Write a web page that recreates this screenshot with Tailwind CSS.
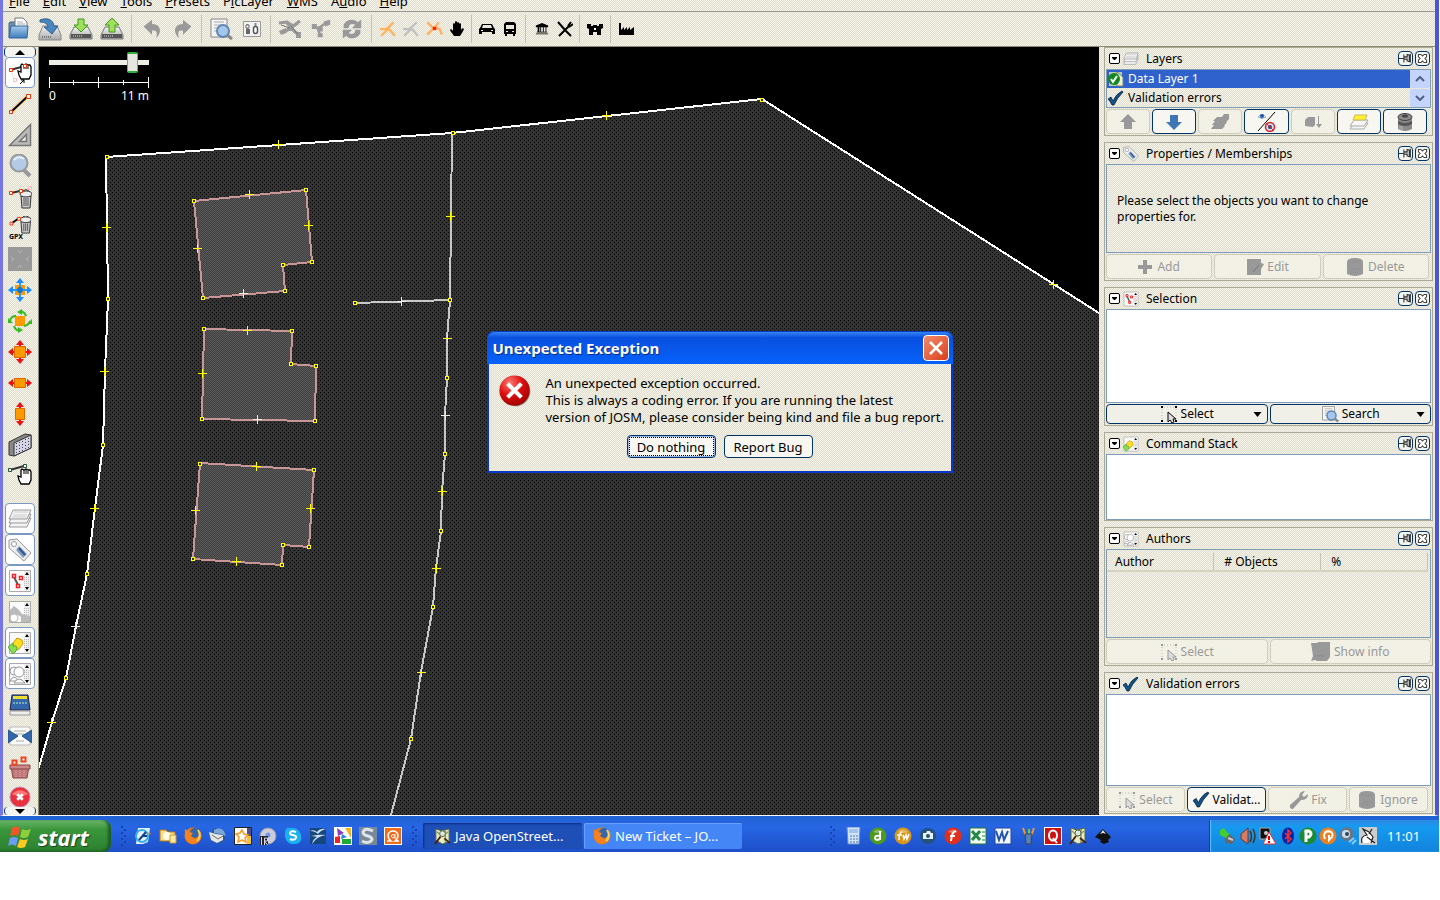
<!DOCTYPE html>
<html lang="en">
<head>
<meta charset="utf-8">
<title>Java OpenStreetMap Editor</title>
<script src="https://cdn.jsdelivr.net/npm/@tailwindcss/browser@4"></script>
</head>
<body class="bg-white text-black text-[12px] leading-4 font-['Noto_Sans','DejaVu_Sans',sans-serif] overflow-hidden">
<svg width="0" height="0" class="absolute" aria-hidden="true">
  <defs>
    <linearGradient id="blue" x1="0" y1="0" x2="0" y2="1"><stop offset="0" stop-color="#a9cbec"/><stop offset="1" stop-color="#3f7cbc"/></linearGradient>
    <linearGradient id="drive" x1="0" y1="0" x2="0" y2="1"><stop offset="0" stop-color="#f4f4f4"/><stop offset="1" stop-color="#a8a8a8"/></linearGradient>
    <radialGradient id="red" cx=".35" cy=".25" r=".8"><stop offset="0" stop-color="#ff7a70"/><stop offset=".5" stop-color="#dd1111"/><stop offset="1" stop-color="#a00000"/></radialGradient>
    <pattern id="dots" width="4" height="4" patternUnits="userSpaceOnUse"><rect width="4" height="4" fill="#333"/><path d="M0 0h1v1h-1zM2 2h1v1h-1z" fill="#000"/></pattern>
    <pattern id="roof" width="2" height="2" patternUnits="userSpaceOnUse"><rect width="2" height="2" fill="#404040"/><path d="M0 0h1v1h-1zM1 1h1v1h-1z" fill="#5a5a5a"/></pattern>
  </defs>
  <symbol id="open" viewBox="0 0 24 24"><path d="M2 20V6l1-1h5l2 2h9v13z" fill="#6f8fae" stroke="#3f6588"/><path d="M8 1h8l4 4v8H8z" fill="#fff" stroke="#777"/><path d="M10 5h6M10 7h8" stroke="#aaa"/><path d="M4 9h17l-1 12H2z" fill="url(#blue)" stroke="#2e659f"/></symbol>
  <symbol id="drv" viewBox="0 0 24 24"><path d="M5 10h14l4 8v4H1v-4z" fill="url(#drive)" stroke="#777"/><path d="M2 17h20v4H2z" fill="#555"/><path d="M4 19h10" stroke="#ddd" stroke-dasharray="1 1"/></symbol>
  <symbol id="openloc" viewBox="0 0 24 24"><path d="M5 9h14l4 9v5H1v-5z" fill="url(#drive)" stroke="#888"/><path d="M4 20h9" stroke="#777" stroke-width="2" stroke-dasharray="1 1"/><path d="M2 3c8-3 13 0 14 6h4l-6 8-8-7h4c0-3-3-5-8-5z" fill="#4a86be" stroke="#2b5f94"/></symbol>
  <symbol id="save" viewBox="0 0 24 24"><use href="#drv"/><path d="M9 2h6v6h4l-7 7-7-7h4z" fill="#9fe05a" stroke="#3f9a1a"/></symbol>
  <symbol id="upload" viewBox="0 0 24 24"><use href="#drv"/><path d="M9 15h6V8h4l-7-7-7 7h4z" fill="#9fe05a" stroke="#3f9a1a"/></symbol>
  <symbol id="undo" viewBox="0 0 24 24"><path d="M2 9l10-8v5c10 0 13 9 5 17 2-8 0-10-5-9v5z" fill="#999"/></symbol>
  <symbol id="find" viewBox="0 0 24 24"><path d="M2 2h16v18H2z" fill="#f5f5f5" stroke="#888"/><path d="M5 5h10M5 8h10M5 11h6M5 14h4" stroke="#aaa"/><circle cx="14" cy="14" r="6" fill="#a5c6ec" stroke="#5f86b4" stroke-width="2"/><path d="M18 18l5 4" stroke="#888" stroke-width="3"/></symbol>
  <symbol id="prefs" viewBox="0 0 24 24"><path d="M3.500 4.500h17v15h-17z" fill="#f2f2f2" stroke="#999"/><path d="M7.500 7v10M15.500 6v11" stroke="#888" stroke-width="2"/><path d="M6 12h4v5H6z" fill="#666"/><rect x="13.500" y="9.500" width="4" height="7" rx="2" fill="#fff" stroke="#555" stroke-width="1.500"/><path d="M6 8h3v3H6z" fill="#fff" stroke="#666"/></symbol>
  <symbol id="split" viewBox="0 0 24 24"><path d="M1 6l8-1 6 4 7-5M20 6L5 16M9 6l8 9 5 3" fill="none" stroke="#999" stroke-width="3"/><path d="M1 14l7-3 1 4-6 3zM18 15h5v6h-5zM9 10h6v4h-6z" fill="#999"/><path d="M3 8l9 3M13 9l7 8" stroke="#777"/></symbol>
  <symbol id="combine" viewBox="0 0 24 24"><path d="M3 9l6 2 10-7M8 11l3 8" fill="none" stroke="#999" stroke-width="3"/><path d="M1 6h6v6H1zM15 3l8-2v6l-6 2zM8 17h6v5H8zM8 9h6v6H8z" fill="#999"/></symbol>
  <symbol id="refresh" viewBox="0 0 24 24"><path d="M2 11V7C5 0 15-1 19 4l4-3v10H12l4-4c-4-2-8-1-8 4zM22 13v4c-3 7-13 8-17 3l-4 3V13h11l-4 4c4 2 8 1 8-4z" fill="#999"/></symbol>
  <symbol id="way" viewBox="0 0 16 16"><path d="M1 8h6l6-6M6 7l3 2M8 8l-6 6M9 8l5 6" fill="none" stroke="currentColor" stroke-width="2"/></symbol>
  <symbol id="junction" viewBox="0 0 16 16"><path d="M2 2l4 4 3 1 3-5M8 7l-6 6M8 7l5 1 2 5" fill="none" stroke="#ffb060" stroke-width="2"/><path d="M7 6h3v3H7z" fill="#f20"/></symbol>
  <symbol id="hand" viewBox="0 0 16 16"><path d="M5 15c-1-2-4-5-4-6s2-1 3 1V3c0-1 2-1 2 0V1c0-1 2-1 2 0v1c0-1 2-1 2 0v1c0-1 2-1 2 0v6c1-2 2-2 3-1-1 3-3 5-4 7z"/></symbol>
  <symbol id="car" viewBox="0 0 16 16"><path d="M3 3h10l2 4 1 1v5h-3v-2H3v2H0V8l1-1zm1 1L3 7h10l-1-3zM2 9v1h2V9zm10 0v1h2V9z" fill-rule="evenodd"/></symbol>
  <symbol id="bus" viewBox="0 0 16 16"><path d="M4 1h8l2 2v10h-1v2h-2v-2H5v2H3v-2H2V3zm0 3v4h8V4zm0 6v1h2v-1zm6 0v1h2v-1z" fill-rule="evenodd"/></symbol>
  <symbol id="bank" viewBox="0 0 16 16"><path d="M1 4l7-3 7 3v2H1zM3 6h2v5H3zM6 6h1v5H6zM9 6h1v5H9zM12 6h1v5h-1zM2 11h12v1H2zM1 13h14v1H1z"/></symbol>
  <symbol id="food" viewBox="0 0 16 16"><path d="M1 1l7 8 6 6M2 15L13 4M11 5l3-4M12 6l4-3" fill="none" stroke="#000" stroke-width="2"/></symbol>
  <symbol id="castle" viewBox="0 0 16 16"><path d="M0 3h4v2h2V4h4v1h2V3h4v4l-2 1v6h-4v-3H6v3H2V8L0 7z"/><path d="M7 7h2v2H7z" fill="#fff"/></symbol>
  <symbol id="factory" viewBox="0 0 16 16"><path d="M0 2h2v7l3-3v3l3-3v3l3-3v3l4-3v8H0z"/></symbol>
  <symbol id="grab" viewBox="0 0 24 24"><path d="M13 22l-2-4-1-4 3 1V8l1-1 2 1 2-1 2 1 2 0 1 2v8l-2 4z" fill="#fff" stroke="#000" stroke-width="1.300"/><path d="M16 8v4M18 8v4M20 9v3" stroke="#000"/></symbol>
  <symbol id="select" viewBox="0 0 24 24"><path d="M2 9l15-4" stroke="#333" stroke-width="2"/><path d="M3 10l3 8" fill="none" stroke="#fbb" stroke-dasharray="1 1"/><path d="M5.500 17.500h3v3h-3z" fill="none" stroke="#fbb"/><g transform="translate(0 -4)"><use href="#grab"/></g><path d="M1.500 7.500h3v3h-3zM15.500 3.500h3v3h-3z" fill="#fff" stroke="#e30"/><path d="M12 23l4-4m-3 0h3v3" fill="none" stroke="#000"/></symbol>
  <symbol id="draw" viewBox="0 0 24 24"><path d="M3 20L20 4" stroke="#fd6" stroke-width="4"/><path d="M3 20L20 4" stroke="#003" stroke-width="2"/><path d="M1.500 18.500h3v3h-3zM18.500 2.500h4v4h-4z" fill="#fff" stroke="#e30"/></symbol>
  <symbol id="angle" viewBox="0 0 24 24"><path d="M22.500 1.500v21h-21zM18.500 11.500v7h-7z" fill="#bbb" stroke="#777" stroke-width="1.500" fill-rule="evenodd"/></symbol>
  <symbol id="zoom" viewBox="0 0 24 24"><path d="M16 16l6 6" stroke="#999" stroke-width="4"/><circle cx="11" cy="9" r="8.500" fill="#b4cbe8" stroke="#999" stroke-width="2"/><path d="M6 6q5-5 10-1" stroke="#e4eefa" stroke-width="2" fill="none"/></symbol>
  <symbol id="bin" viewBox="0 0 24 24"><path d="M13 11h10l-1 12h-8z" fill="#ccc" stroke="#333"/><path d="M16 13v8M18 13v8M20 13v8" stroke="#555"/><ellipse cx="18" cy="9" rx="6" ry="3" fill="#eee" stroke="#333"/><path d="M15 6q3-3 6 0" stroke="#333" fill="none"/></symbol>
  <symbol id="delete" viewBox="0 0 24 24"><path d="M3 8l9-2" stroke="#333" stroke-width="2"/><use href="#bin"/><path d="M1.500 6.500h3v3h-3zM11.500 4.500h3v3h-3z" fill="#fff" stroke="#e30"/><path d="M20.500 1.500h3v3h-3z" fill="none" stroke="#fbb"/></symbol>
  <symbol id="delgpx" viewBox="0 0 24 24"><g transform="translate(0 -5)"><use href="#bin"/></g><path d="M3 8l7-5" stroke="#000" stroke-width="2"/><path d="M1.500 6.500h3v3h-3zM9.500 1.500h3v3h-3z" fill="#fff" stroke="#e30"/></symbol>
  <symbol id="grayarea" viewBox="0 0 24 24"><path d="M0 0h24v24H0z" fill="#999"/><path d="M10 3l2 3 2-3M10 21l2-3 2 3M3 10l3 2-3 2M21 10l-3 2 3 2" fill="none" stroke="#b4b4b4"/></symbol>
  <symbol id="move" viewBox="0 0 24 24"><path d="M7 7h10v10H7z" fill="#f90"/><path d="M12 2v20M2 12h20" stroke="#29f" stroke-width="2"/><path d="M12 0L8 5h8zM12 24l-4-5h8zM0 12l5-4v8zM24 12l-5-4v8z" fill="#1a8cff"/><circle cx="12" cy="12" r="3" fill="#17c"/></symbol>
  <symbol id="rotate" viewBox="0 0 24 24"><path d="M7 7h10v10H7z" fill="#f90"/><path d="M12 2q5 1 6 5M22 12q-1 4-6 5M12 22q-5-1-6-5M2 12q1-5 6-5" fill="none" stroke="#3b2" stroke-width="2"/><path d="M14 0v6l-5-3zM24 10v5h-5zM10 24v-6l5 3zM0 14V9l5 5z" fill="#3b2"/></symbol>
  <symbol id="scale" viewBox="0 0 24 24"><path d="M12 0L8 5h3v14H8l4 5 4-5h-3V5h3zM0 12l5-4v3h14V8l5 4-5 4v-3H5v3z" fill="#e11"/><path d="M6.500 6.500h11v11h-11z" fill="#f90" stroke="#d60"/></symbol>
  <symbol id="hscale" viewBox="0 0 24 24"><path d="M0 12l5-4v3h14V8l5 4-5 4v-3H5v3z" fill="#e11"/><path d="M6.500 7.500h11v9h-11z" fill="#f90" stroke="#d60"/></symbol>
  <symbol id="vscale" viewBox="0 0 24 24"><path d="M12 0L8 5h3v14H8l4 5 4-5h-3V5h3z" fill="#e11"/><path d="M7.500 6.500h9v11h-9z" fill="#f90" stroke="#d60"/></symbol>
  <symbol id="wall" viewBox="0 0 24 24"><path d="M1 9L17 1l6 1v13L6 23l-5-1z" fill="#888" stroke="#333"/><path d="M6 10l17-8v13L6 23z" fill="#d4d4e6" stroke="#333"/><path d="M8.500 10v11M11.500 9v10M14.500 8v10M17.500 6v10M20.500 5v10" stroke="#445" stroke-dasharray="1 2"/></symbol>
  <symbol id="movenode" viewBox="0 0 24 24"><path d="M2 8l14-4" stroke="#333" stroke-width="2"/><use href="#grab"/><path d="M.5 6.500h3v3h-3zM15.500 2.500h3v3h-3z" fill="#fff" stroke="#253"/></symbol>
  <symbol id="layers" viewBox="0 0 24 24"><g fill="#f4f4f4" stroke="#999"><path d="M1 20l4-9h18l-4 9z"/><path d="M1 16l4-9h18l-4 9z"/><path d="M1 12l4-9h18l-4 9z"/></g><path d="M6 5h14M5 8h14M4 10h14" stroke="#ccc"/></symbol>
  <symbol id="tag" viewBox="0 0 24 24"><path d="M1 2l8-1 14 14-7 8L1 10z" fill="#eee" stroke="#999"/><circle cx="6" cy="6" r="2.500" fill="#fff" stroke="#999"/><path d="M11 8l8 8-4 4-7-8z" fill="#7d9cc4"/><path d="M11 10l6 7" stroke="#358" stroke-width="2"/></symbol>
  <symbol id="list" viewBox="0 0 24 24"><path d="M1.500 1.500h21v21h-21z" fill="#fafafa" stroke="#aaa"/><path d="M16 2h6v20h-6z" fill="#eee"/><path d="M19 3l2 3h-4zM19 21l2-3h-4z"/><path d="M16.500 8v9M18.500 8v9M20.500 8v9" stroke="#bbb" stroke-dasharray="1 1"/></symbol>
  <symbol id="sellist" viewBox="0 0 24 24"><use href="#list"/><path d="M6 8l4 8" stroke="#555" stroke-width="2"/><path d="M4.500 5.500h3v3h-3zM11.500 7.500h3v3h-3zM8.500 15.500h3v3h-3z" fill="#fff" stroke="#e22" stroke-width="1.500"/></symbol>
  <symbol id="rellist" viewBox="0 0 24 24"><use href="#list"/><path d="M2 10l4-4 4 3 4 5 8 2v6h-9v-5l-3-2-5 2v5H2z" fill="#bbb"/><circle cx="6" cy="18" r="4" fill="#fff" stroke="#bbb"/></symbol>
  <symbol id="cmdlist" viewBox="0 0 24 24"><use href="#list"/><path d="M5 12l4-5 5 2 1 4-5 6-4-2z" fill="#fd2" stroke="#c90"/><path d="M0 16l5-4v3q6-1 3 5l-3 3z" fill="#8d5" stroke="#5a3"/></symbol>
  <symbol id="userlist" viewBox="0 0 24 24"><use href="#list"/><g fill="#fff" stroke="#999"><circle cx="6" cy="9" r="4"/><path d="M2 19q4-8 8 0z"/><circle cx="11" cy="10" r="5"/><path d="M6 21q5-8 11 0z"/></g></symbol>
  <symbol id="book" viewBox="0 0 24 24"><path d="M4 2h16l2 15H2z" fill="#36a" stroke="#224"/><path d="M5 3h14v3H5z" fill="#ed3"/><path d="M5 10h14" stroke="#7ab" stroke-width="2" stroke-dasharray="2 1"/><path d="M2 18h20v4H2z" fill="#eee" stroke="#999"/></symbol>
  <symbol id="conflict" viewBox="0 0 24 24"><path d="M2 3h20v18H2z" fill="#fafafa" stroke="#bbb"/><path d="M6 7h12M8 10h8M8 17h8" stroke="#aaa"/><path d="M0 6l10 6-10 7zM24 6l-10 6 10 7z" fill="#36a" stroke="#258"/></symbol>
  <symbol id="basket" viewBox="0 0 24 24"><path d="M3 11h18l-2 12H5z" fill="#c07878" stroke="#844"/><path d="M2 10h20v4H2z" fill="#c88" stroke="#844"/><path d="M8 15v7M12 15v7M16 15v7" stroke="#daa" stroke-dasharray="1 1"/><path d="M4.500 5.500h4v4h-4zM13.500 2.500h4v4h-4z" fill="#fff" stroke="#e42" stroke-width="2"/></symbol>
  <symbol id="error" viewBox="0 0 24 24"><circle cx="12.500" cy="12.500" r="11" fill="#000" opacity=".4"/><circle cx="12" cy="12" r="11" fill="url(#red)"/><path d="M7 7l10 10M17 7L7 17" stroke="#fff" stroke-width="3"/></symbol>
  <symbol id="redx" viewBox="0 0 24 24"><circle cx="12" cy="12" r="11" fill="#e8313a" stroke="#b9c"/><path d="M3 9q9-9 18 0-9 4-18 0z" fill="#f77"/><path d="M9 9l6 6M15 9l-6 6" stroke="#fff" stroke-width="3"/></symbol>
  <symbol id="check" viewBox="0 0 16 16"><path d="M0 9l3-2 2 4q3-7 9-10l1 1Q9 8 6 15H4Q2 11 0 9z" fill="#158" stroke="#013" stroke-width=".7"/></symbol>
  <symbol id="datal" viewBox="0 0 16 16"><path d="M1 1h13v14H1z" fill="#bca"/><path d="M9 1l6 5v9H9z" fill="#eed" stroke="#786"/><circle cx="6" cy="8" r="6" fill="#182"/><path d="M3 8l2 3 4-6" stroke="#fff" stroke-width="2" fill="none"/></symbol>
  <symbol id="pin" viewBox="0 0 16 16"><path d="M0 8h6M6 3v10M6 6h4V3l3 1v8l-3-1V9H6M14 2v11" fill="#bbb" stroke="#333" stroke-width="1.300"/></symbol>
  <symbol id="cls" viewBox="0 0 16 16"><path d="M3 3h3l2 2 2-2h3v3l-2 2 2 2v3h-3l-2-2-2 2H3v-3l2-2-2-2z" fill="#fff" stroke="#444" stroke-width="1.300"/></symbol>
  <symbol id="fold" viewBox="0 0 12 12"><rect x=".5" y=".5" width="10" height="10" rx="1.500" fill="#fff" stroke="#000"/><path d="M3 4h5v1L6 7H5L3 5z"/></symbol>
  <symbol id="aup" viewBox="0 0 16 16"><path d="M8 0l8 8h-4v7H4V8H0z" fill="currentColor"/></symbol>
  <symbol id="stack" viewBox="0 0 20 16"><path d="M1 15l3-4H2l3-4H3l4-4h5l2-3h5v5l-3 3h1l-3 4h1l-3 3z" fill="#999"/></symbol>
  <symbol id="eyes" viewBox="0 0 20 20"><path d="M2 5q4-5 8 0-4 3-8 0z" fill="#fff" stroke="#8ac"/><circle cx="6" cy="4" r="2" fill="#25a"/><path d="M19 0L2 19" stroke="#000"/><circle cx="14" cy="15" r="4.500" fill="#cdf" stroke="#d22" stroke-width="1.500"/><circle cx="14" cy="15" r="2" fill="#346"/><path d="M11 12l6 6" stroke="#d22"/></symbol>
  <symbol id="merge" viewBox="0 0 18 16"><path d="M1 12V6l3-3h7v8l-2 2zM14 2h1v8h3l-3 4-3-4h2z" fill="#999"/></symbol>
  <symbol id="lyellow" viewBox="0 0 20 18"><g fill="#f6f6f6" stroke="#aaa"><path d="M1 16l4-6h14l-4 6z"/><path d="M1 13l4-6h14l-4 6z"/></g><path d="M4 7l2-5h12l-2 5z" fill="#fe3" stroke="#cb5"/></symbol>
  <symbol id="trash" viewBox="0 0 16 20"><path d="M1 5h14v12q-7 4-14 0z" fill="currentColor"/><ellipse cx="8" cy="5" rx="7" ry="3.500" fill="currentColor" stroke="#444"/><ellipse cx="8" cy="4" rx="3" ry="1.500" fill="#444"/><path d="M1 9q7 4 14 0v3q-7 4-14 0z" fill="#555"/><path d="M3 14v3M5 14v4" stroke="#bbb"/></symbol>
  <symbol id="gtrash" viewBox="0 0 16 20"><path d="M0 5q0-4 8-4t8 4v12q-8 4-16 0z" fill="#999"/><path d="M3 5h10M4 12h9M4 15h8" stroke="#888" stroke-dasharray="1 1"/></symbol>
  <symbol id="plus" viewBox="0 0 14 14"><path d="M5 0h4v5h5v4H9v5H5V9H0V5h5z" fill="#999"/></symbol>
  <symbol id="edit" viewBox="0 0 18 18"><path d="M1 1h14v4l3 1-3 5v6H1z" fill="#999"/><path d="M7 14l6-7" stroke="#777"/></symbol>
  <symbol id="selarrow" viewBox="0 0 18 18"><path d="M1 1h2v2H1zM15 1h2v2h-2zM1 15h2v2H1zM15 15h2v2h-2z" fill="currentColor"/><path d="M4 2h10M2 4v10M16 4v10" stroke="#bbb" stroke-dasharray="1 2"/><path d="M8 7v10l2-2 2 3 2-1-1-3h3z" fill="#ddd" stroke="currentColor"/></symbol>
  <symbol id="wrench" viewBox="0 0 20 20"><path d="M2 15L11 7q0-6 6-6l-3 4 2 2 4-3q0 6-7 6L5 19q-4 0-3-4z" fill="#999"/></symbol>
  <symbol id="info" viewBox="0 0 20 20"><path d="M0 1h6q2-2 7-1h6v15l-3 4H6l-2-1-4 1 2-5z" fill="#999"/><path d="M4 14h10" stroke="#888" stroke-width="2" stroke-dasharray="1 1"/></symbol>
  <symbol id="ie" viewBox="0 0 18 18"><path d="M4 1h12l-2 14-5 2H2z" fill="#e8f2ff"/><circle cx="8" cy="9" r="6" fill="none" stroke="#37b0ea" stroke-width="2"/><path d="M5 13l7-8M8 9h5" stroke="#148" stroke-width="2"/><path d="M14 6l3 1" stroke="#d73"/></symbol>
  <symbol id="folder" viewBox="0 0 18 18"><path d="M1 3h6l2 2h7v9H1z" fill="#fbdc7c" stroke="#b87a1c"/><circle cx="8" cy="9" r="4" fill="#fffbe6"/><path d="M11 8h6v8h-6z" fill="#ffeba0" stroke="#c93"/></symbol>
  <symbol id="firefox" viewBox="0 0 18 18"><circle cx="9" cy="9" r="8.500" fill="#e77a16"/><circle cx="11" cy="6" r="5" fill="#36a"/><path d="M1 2l4 3 4 1-2 3 4 3 4-3 1-5q3 6-1 10-4 4-9 2-6-3-5-14z" fill="#f58220"/><path d="M14 3q4 6-1 11" stroke="#ffd34d" stroke-width="2" fill="none"/></symbol>
  <symbol id="tbird" viewBox="0 0 18 18"><circle cx="9" cy="9" r="8" fill="#2b5a9c"/><path d="M0 5l7 2 7 1v5l-6 3-6-3z" fill="#dfe6ec"/><path d="M3 8l6 4 5-3" stroke="#864" fill="none"/><path d="M5 3q6-4 10 1l2 5-5-2-7-1z" fill="#7aa6d8"/></symbol>
  <symbol id="star" viewBox="0 0 18 18"><path d="M.5.500h17v17H.5z" fill="#fff" stroke="#222"/><path d="M13 1h4v8h-4z" fill="#534b8a"/><path d="M13 9h4v8h-4z" fill="#f5c13a"/><path d="M8 3l2 4 4 1-3 3 1 4-4-2-4 2 1-5-3-3 4-1z" fill="#fff" stroke="#f79b1c" stroke-width="1.500"/></symbol>
  <symbol id="disc" viewBox="0 0 18 18"><circle cx="9" cy="9" r="8" fill="#ccd" stroke="#99a"/><circle cx="9" cy="8" r="2.500" fill="#7896e0"/><path d="M1 9h8v9H1z" fill="#223"/><path d="M2.500 10v8M5.500 18v-7h3v3h-3l3 4" stroke="#ddd" fill="none"/></symbol>
  <symbol id="skype" viewBox="0 0 18 18"><path d="M1 6q0-6 6-5 8-1 10 7 2 8-6 9-8 1-10-7z" fill="#19b1f0"/><path d="M12 5q-5-2-6 1 0 2 3 2 4 1 3 3-2 3-6 1" stroke="#fff" stroke-width="2" fill="none"/></symbol>
  <symbol id="oo" viewBox="0 0 18 18"><path d="M1 1h16v16H1z" fill="#17487d"/><path d="M1 4q4-2 7 1 3-4 9-3-5 1-8 5-3-3-8-3zM2 9q9-2 15-1-9 1-14 9 1-5 5-7-3-1-6-1z" fill="#cfe0f2"/></symbol>
  <symbol id="picasa" viewBox="0 0 18 18"><path d="M0 0h18v18H0z" fill="#fff"/><path d="M3 1l7 5-6 3z" fill="#8a3fae"/><path d="M11 1h6v10z" fill="#f1b51c"/><path d="M1 10l5-1v7H1z" fill="#e22"/><path d="M8 12h9v5H8z" fill="#2a3"/><path d="M8 7l5 3-6 2z" fill="#28d"/></symbol>
  <symbol id="sgray" viewBox="0 0 18 18"><path d="M0 0h18v18H0z" fill="#789"/><path d="M14 4Q6 0 4 5q0 3 5 4 6 2 3 5-4 3-9 0" fill="none" stroke="#dde4e8" stroke-width="3"/></symbol>
  <symbol id="aorange" viewBox="0 0 18 18"><rect x=".5" y=".5" width="17" height="17" fill="#f26a1b" stroke="#fff"/><path d="M3 14h4q-3-2-3-6 1-4 5-4t5 4q0 4-3 6h4" fill="none" stroke="#fff" stroke-width="1.500"/><path d="M11 7v5M11 8q-4-1-4 1 1 3 4 1" fill="none" stroke="#fff"/></symbol>
  <symbol id="josm" viewBox="0 0 18 18"><path d="M2 1l6 2 8-2v13l-7 3-7-4z" fill="#e8ecc4" stroke="#564"/><path d="M3 4l6 5 6-5M12 2v13" stroke="#8a9a5a" fill="none" stroke-width="1.500"/><circle cx="9" cy="6" r="3" fill="#dfe9e4" stroke="#564"/><path d="M1 17l6-8M11 11l6 5" stroke="#421" stroke-width="2"/></symbol>
  <symbol id="calc" viewBox="0 0 18 18"><path d="M3 0h13l-1 17H4z" fill="#cfe3fb" stroke="#6a8cc0"/><path d="M5 2h9v4H5z" fill="#a4c4ee"/><path d="M6 9h8M6 12h8M6 15h8" stroke="#579" stroke-dasharray="2 1"/></symbol>
  <symbol id="ball" viewBox="0 0 18 18"><circle cx="9" cy="9" r="8.500" fill="currentColor"/><path d="M4 5q5-5 10 0-5 2-10 0z" fill="#fff" opacity=".35"/></symbol>
  <symbol id="camera" viewBox="0 0 18 18"><circle cx="9" cy="9" r="8" fill="#24527e"/><path d="M4 6h3l1-2h3l1 2h2v6H4z" fill="#e8f0f8"/><circle cx="9" cy="9" r="2" fill="#24527e"/></symbol>
  <symbol id="excel" viewBox="0 0 18 18"><path d="M1 1h16v16H1z" fill="#f2fbf2" stroke="#273"/><path d="M3 4l8 9M11 4l-8 9" stroke="#284" stroke-width="3"/><path d="M13 5h3M13 9h3M13 13h3" stroke="#284"/></symbol>
  <symbol id="word" viewBox="0 0 18 18"><path d="M1 1h16v16H1z" fill="#f2f6ff" stroke="#249"/><path d="M2 4l3 9 3-8 2 8 4-9" fill="none" stroke="#25a" stroke-width="2"/></symbol>
  <symbol id="pens" viewBox="0 0 18 18"><path d="M7 9L4 1M12 9l3-8" stroke="#e93" stroke-width="2"/><path d="M10 8V2" stroke="#6c4" stroke-width="2"/><path d="M6 7h7l-1 10H7z" fill="#5a7fb0" stroke="#345"/></symbol>
  <symbol id="qred" viewBox="0 0 18 18"><rect x=".5" y=".5" width="17" height="17" fill="#c11" stroke="#fff"/><ellipse cx="9" cy="8.500" rx="4" ry="5" fill="none" stroke="#fff" stroke-width="2"/><path d="M9 11l4 5" stroke="#fff" stroke-width="2"/></symbol>
  <symbol id="inkscape" viewBox="0 0 18 18"><path d="M9 2l8 8-3 3 1 2-5 2-4-2 1-2-6-3z" fill="#111"/><path d="M9 3l3 4-3-1-3 1z" fill="#ddd"/></symbol>
  <symbol id="usb" viewBox="0 0 18 18"><path d="M4 6l5 0 7 6-3 5-6-1z" fill="#666"/><path d="M1 3l4-2 4 5h2L7 11 1 8z" fill="#4c3"/><path d="M9 11l5 2" stroke="#ccc" stroke-width="2"/></symbol>
  <symbol id="speaker" viewBox="0 0 18 18"><path d="M2 7l7-6v16l-7-5z" fill="#d87a60" stroke="#732"/><path d="M11 4q3 5 0 11M14 2q4 7 0 14" stroke="#432" fill="none" stroke-width="1.500"/></symbol>
  <symbol id="warn" viewBox="0 0 18 18"><path d="M1 1h10v11H1z" fill="#111" stroke="#aaa"/><circle cx="7" cy="6" r="2" fill="#ccc"/><path d="M10 5l7 12H4z" fill="#fff" stroke="#d33"/><path d="M10 9v4M10 14v2" stroke="#d00" stroke-width="2"/></symbol>
  <symbol id="bt" viewBox="0 0 18 18"><ellipse cx="9" cy="9" rx="6" ry="8.500" fill="#0a22a8"/><path d="M6 6l6 6-3 3V3l3 3-6 6" fill="none" stroke="#e33" stroke-width="1.500"/></symbol>
  <symbol id="disk2" viewBox="0 0 18 18"><circle cx="8" cy="7" r="7" fill="#678"/><circle cx="7" cy="7" r="4" fill="#cde"/><circle cx="8" cy="7" r="2" fill="#345"/><path d="M10 15l5-4M13 17l4-4" stroke="#8cf" stroke-width="2"/></symbol>
  <symbol id="mouse" viewBox="0 0 18 18"><path d="M0 0h18v18H0z" fill="#ccc"/><path d="M3 16Q1 9 8 8l-4-6 6 3 4 5-2 6M8 10l8 6M13 2l-3 5" fill="#fff" stroke="#222" stroke-width="1.200"/></symbol>
  <symbol id="grip" viewBox="0 0 6 24"><path d="M0 2h2v2H0zM3 5h2v2H3zM0 8h2v2H0zM3 11h2v2H3zM0 14h2v2H0zM3 17h2v2H3zM0 20h2v2H0z" fill="#1743b0"/></symbol>
</svg>

<div class="relative mr-px">
<div class="flex flex-col border-l-3 border-l-[#7676e4] border-r-4 border-r-[#4a55d8] border-b border-b-white bg-[repeating-conic-gradient(#f6f4e2_0_25%,#dedcd4_0_50%)] bg-[length:2px_2px]">
  <nav class="flex h-[11px] items-end gap-[13px] overflow-hidden pb-px pl-[6px] text-[13px] leading-[18px]" aria-label="Menu">
    <button><u>F</u>ile</button><button><u>E</u>dit</button><button><u>V</u>iew</button><button><u>T</u>ools</button><button><u>P</u>resets</button><button>P<u>i</u>cLayer</button><button><u>W</u>MS</button><button>A<u>u</u>dio</button><button><u>H</u>elp</button>
  </nav>
  <div class="flex h-[36px] items-center border-t border-b border-t-[#999] border-b-[#8c8c72]" role="toolbar">
    <button class="flex w-[31px] justify-center" aria-label="Open"><svg class="size-6"><use href="#open"/></svg></button>
    <button class="flex w-[31px] justify-center" aria-label="Open location"><svg class="size-6"><use href="#openloc"/></svg></button>
    <button class="flex w-[31px] justify-center" aria-label="Save"><svg class="size-6"><use href="#save"/></svg></button>
    <button class="flex w-[31px] justify-center" aria-label="Upload"><svg class="size-6"><use href="#upload"/></svg></button>
    <span class="mx-[4px] h-[28px] w-px bg-[#c4c2b4]"></span>
    <button class="flex w-[31px] justify-center" aria-label="Undo"><svg class="size-[20px]"><use href="#undo"/></svg></button>
    <button class="flex w-[31px] justify-center" aria-label="Redo"><svg class="size-[20px] -scale-x-100"><use href="#undo"/></svg></button>
    <span class="mx-[3px] h-[28px] w-px bg-[#c4c2b4]"></span>
    <button class="flex w-[31px] justify-center" aria-label="Search"><svg class="size-6"><use href="#find"/></svg></button>
    <button class="flex w-[31px] justify-center" aria-label="Preferences"><svg class="size-6"><use href="#prefs"/></svg></button>
    <span class="mx-[3px] h-[28px] w-px bg-[#c4c2b4]"></span>
    <button class="flex w-[31px] justify-center" aria-label="Split way"><svg class="size-6"><use href="#split"/></svg></button>
    <button class="flex w-[31px] justify-center" aria-label="Combine way"><svg class="size-[20px]"><use href="#combine"/></svg></button>
    <button class="flex w-[31px] justify-center" aria-label="Update"><svg class="size-[20px]"><use href="#refresh"/></svg></button>
    <span class="mx-[4px] h-[28px] w-px bg-[#c4c2b4]"></span>
    <button class="flex w-[23px] justify-center text-[#ffb35c]" aria-label="Highway"><svg class="size-[18px]"><use href="#way"/></svg></button>
    <button class="flex w-[23px] justify-center text-[#c0c0c0]" aria-label="Road"><svg class="size-[18px]"><use href="#way"/></svg></button>
    <button class="flex w-[23px] justify-center" aria-label="Junction"><svg class="size-[18px]"><use href="#junction"/></svg></button>
    <button class="flex w-[23px] justify-center" aria-label="Barrier"><svg class="size-4"><use href="#hand"/></svg></button>
    <span class="mx-[3px] h-[28px] w-px bg-[#c4c2b4]"></span>
    <button class="flex w-[23px] justify-center" aria-label="Car"><svg class="size-4"><use href="#car"/></svg></button>
    <button class="flex w-[23px] justify-center" aria-label="Bus"><svg class="size-4"><use href="#bus"/></svg></button>
    <span class="mx-[4px] h-[28px] w-px bg-[#c4c2b4]"></span>
    <button class="flex w-[23px] justify-center" aria-label="Facilities"><svg class="size-[14px]"><use href="#bank"/></svg></button>
    <button class="flex w-[23px] justify-center" aria-label="Food"><svg class="size-4"><use href="#food"/></svg></button>
    <span class="mx-[3px] h-[28px] w-px bg-[#c4c2b4]"></span>
    <button class="flex w-[23px] justify-center" aria-label="Historic"><svg class="size-4"><use href="#castle"/></svg></button>
    <span class="mx-[4px] h-[28px] w-px bg-[#c4c2b4]"></span>
    <button class="flex w-[23px] justify-center" aria-label="Industry"><svg class="size-4"><use href="#factory"/></svg></button>
  </div>

  <main class="flex">
    <div class="flex w-[36px] flex-col border-r border-[#8c8c72] pr-px" role="toolbar" aria-label="Map modes">
      <button class="mx-px flex h-[10px] shrink-0 items-center justify-center rounded-sm border border-y-0 border-[#036] bg-[#f4f4f0]" aria-label="Scroll up"><svg class="h-[5px] w-[10px]" viewBox="0 0 10 5"><path d="M0 5L5 0l5 5z"/></svg></button>
      <button class="mx-[2px] flex h-[31px] items-center justify-center rounded-sm border border-[#7a98c0] bg-white" aria-label="Select"><svg class="size-6"><use href="#select"/></svg></button>
      <button class="flex h-[31px] items-center justify-center" aria-label="Draw"><svg class="size-6"><use href="#draw"/></svg></button>
      <button class="flex h-[31px] items-center justify-center" aria-label="Angle"><svg class="size-6"><use href="#angle"/></svg></button>
      <button class="flex h-[31px] items-center justify-center" aria-label="Zoom"><svg class="size-6"><use href="#zoom"/></svg></button>
      <button class="flex h-[31px] items-center justify-center" aria-label="Delete"><svg class="size-6"><use href="#delete"/></svg></button>
      <button class="flex h-[31px] flex-col items-center justify-center text-[7px] leading-[6px] font-bold" aria-label="Delete GPX"><svg class="h-[18px] w-6" viewBox="0 0 24 19"><use href="#delgpx" width="24" height="24"/></svg><span class="pr-2">GPX</span></button>
      <button class="flex h-[31px] items-center justify-center" aria-label="Area"><svg class="size-6"><use href="#grayarea"/></svg></button>
      <button class="flex h-[31px] items-center justify-center" aria-label="Move"><svg class="size-6"><use href="#move"/></svg></button>
      <button class="flex h-[31px] items-center justify-center" aria-label="Rotate"><svg class="size-6"><use href="#rotate"/></svg></button>
      <button class="flex h-[31px] items-center justify-center" aria-label="Scale"><svg class="size-6"><use href="#scale"/></svg></button>
      <button class="flex h-[31px] items-center justify-center" aria-label="Scale horizontally"><svg class="size-6"><use href="#hscale"/></svg></button>
      <button class="flex h-[31px] items-center justify-center" aria-label="Scale vertically"><svg class="size-6"><use href="#vscale"/></svg></button>
      <button class="flex h-[31px] items-center justify-center" aria-label="Shear"><svg class="size-6"><use href="#wall"/></svg></button>
      <button class="flex h-[31px] items-center justify-center pb-[4px]" aria-label="Move node"><svg class="size-6"><use href="#movenode"/></svg></button>
      <button class="mx-[2px] mt-[12px] flex h-[31px] items-center justify-center rounded-sm border border-[#7a98c0] bg-white" aria-label="Layers"><svg class="size-6"><use href="#layers"/></svg></button>
      <button class="mx-[2px] flex h-[31px] items-center justify-center rounded-sm border border-[#7a98c0] bg-white" aria-label="Properties"><svg class="size-6"><use href="#tag"/></svg></button>
      <button class="mx-[2px] flex h-[31px] items-center justify-center rounded-sm border border-[#7a98c0] bg-white" aria-label="Selection"><svg class="size-6"><use href="#sellist"/></svg></button>
      <button class="flex h-[31px] items-center justify-center" aria-label="Relations"><svg class="size-6"><use href="#rellist"/></svg></button>
      <button class="mx-[2px] flex h-[31px] items-center justify-center rounded-sm border border-[#7a98c0] bg-white" aria-label="Command stack"><svg class="size-6"><use href="#cmdlist"/></svg></button>
      <button class="mx-[2px] flex h-[31px] items-center justify-center rounded-sm border border-[#7a98c0] bg-white" aria-label="Authors"><svg class="size-6"><use href="#userlist"/></svg></button>
      <button class="flex h-[31px] items-center justify-center" aria-label="History"><svg class="size-6"><use href="#book"/></svg></button>
      <button class="flex h-[31px] items-center justify-center" aria-label="Conflicts"><svg class="size-6"><use href="#conflict"/></svg></button>
      <button class="flex h-[31px] items-center justify-center" aria-label="Changesets"><svg class="size-6"><use href="#basket"/></svg></button>
      <button class="flex h-[25px] items-start justify-center overflow-hidden pt-[4px]" aria-label="Errors"><svg class="size-[22px] shrink-0"><use href="#redx"/></svg></button>
      <button class="mx-px flex h-[8px] shrink-0 items-center justify-center rounded-sm border border-y-0 border-[#036] bg-[#f4f4f0]" aria-label="Scroll down"><svg class="h-[5px] w-[10px]" viewBox="0 0 10 5"><path d="M0 0l5 5 5-5z"/></svg></button>
    </div>

    <section class="relative min-w-0 flex-1 overflow-hidden bg-black" aria-label="Map">
      <svg class="absolute inset-0 h-full w-full" shape-rendering="crispEdges">
        <g transform="translate(-39 -47)" fill="none">
          <path d="M106 157L452 133 762 99 1099 313 1440 530V900H20V815L39 767 52 722 66 678 76 626 87 574 95 508 103 445 105 371 108 299 107 227z" fill="url(#dots)"/>
          <path d="M20 815L39 767 52 722 66 678 76 626 87 574 95 508 103 445 105 371 108 299 107 227 106 157 452 133 762 99 1099 313 1440 530" stroke="#fff" stroke-width="2"/>
          <path d="M452 133L451 216 450 301 447 338 447 378 445 415 445 454 442 491 441 531 436 568 433 607 421 672 411 739 391 815M450 300L355 303" stroke="#c8c8c8" stroke-width="2"/>
          <g fill="url(#roof)" stroke="#c89696" stroke-width="2">
            <path d="M194 201L306 190 312 262 283 265 285 291 203 298z"/>
            <path d="M204 329L292 331 291 364 316 366 315 421 202 419z"/>
            <path d="M200 463L314 470 309 547 283 545 282 565 193 559z"/>
          </g>
          <path d="M102 227.500h9m-4.500-4.500v9M274 144.500h10m-5.500-4.500v9M602 115.500h9m-4.500-4.500v9M1049 284.500h9m-4.500-4.500v9M446 216.500h9m-4.500-4.500v9M443 338.500h9m-4.500-4.500v9M438 491.500h9m-4.500-4.500v9M432 568.500h9m-4.500-4.500v9M417 672.500h9m-4.500-4.500v9M100 371.500h9m-4.500-4.500v9M90 508.500h9m-4.500-4.500v9M47 722.500h9m-4.500-4.500v9M245 194.500h9m-4.500-4.500v9M304 225.500h9m-4.500-4.500v9M193 248.500h9m-4.500-4.500v9M243 330.500h9m-4.500-4.500v9M198 373.500h9m-4.500-4.500v9M252 466.500h9m-4.500-4.500v9M191 510.500h9m-4.500-4.500v9M306 508.500h9m-4.500-4.500v9M232 561.500h9m-4.500-4.500v9" stroke="#ff0"/>
          <path d="M441 415.500h9m-4.500-4.500v9M397 301.500h9m-4.500-4.500v9M239 293.500h9m-4.500-4.500v9M253 419.500h9m-4.500-4.500v9M71 626.500h9m-4.500-4.500v9" stroke="#eed"/>
          <path d="M105.500 155.500h3v3h-3zM451.500 131.500h3v3h-3zM760.500 98.500h3v3h-3zM106.500 297.500h3v3h-3zM101.500 443.500h3v3h-3zM85.500 572.500h3v3h-3zM64.500 676.500h3v3h-3zM448.500 298.500h3v3h-3zM353.500 301.500h3v3h-3zM445.500 376.500h3v3h-3zM443.500 452.500h3v3h-3zM439.500 529.500h3v3h-3zM431.500 605.500h3v3h-3zM409.500 737.500h3v3h-3zM192.500 199.500h3v3h-3zM304.500 188.500h3v3h-3zM310.500 260.500h3v3h-3zM281.500 263.500h3v3h-3zM283.500 289.500h3v3h-3zM201.500 296.500h3v3h-3zM202.500 327.500h3v3h-3zM290.500 329.500h3v3h-3zM289.500 362.500h3v3h-3zM314.500 364.500h3v3h-3zM313.500 419.500h3v3h-3zM200.500 417.500h3v3h-3zM198.500 462.500h3v3h-3zM312.500 468.500h3v3h-3zM307.500 545.500h3v3h-3zM281.500 543.500h3v3h-3zM280.500 563.500h3v3h-3zM191.500 557.500h3v3h-3z" stroke="#ff0" fill="#333"/>
          <path d="M49.500 77v11M49 82.500h100M148.500 77v11M98.500 77v11M73.500 80v5M123.500 80v5" stroke="#fff"/>
        </g>
      </svg>
      <div class="absolute top-[4px] left-[10px] w-[100px] text-white">
        <input type="range" value="88" aria-label="Zoom" class="block h-[22px] w-full appearance-none bg-transparent [&::-webkit-slider-runnable-track]:h-[5px] [&::-webkit-slider-runnable-track]:bg-[#eeeee6] [&::-webkit-slider-thumb]:-mt-2 [&::-webkit-slider-thumb]:h-[21px] [&::-webkit-slider-thumb]:w-[11px] [&::-webkit-slider-thumb]:appearance-none [&::-webkit-slider-thumb]:rounded-xs [&::-webkit-slider-thumb]:border [&::-webkit-slider-thumb]:border-y-2 [&::-webkit-slider-thumb]:border-x-[#8a9a8a] [&::-webkit-slider-thumb]:border-y-[#2eb03a] [&::-webkit-slider-thumb]:bg-[#e6e6e0]">
        <div class="flex justify-between pt-[15px]"><span>0</span><span>11 m</span></div>
      </div>
    </section>

    <aside class="flex w-[336px] flex-col gap-[6px] pr-[2px] pb-px pl-[5px]">
      <section class="border border-[#aaa896] px-px pb-px">
        <header class="flex h-[21px] items-center pr-px pl-[3px]"><svg class="mr-[2px] size-[12px]"><use href="#fold"/></svg><svg class="mr-[7px] size-4"><use href="#layers"/></svg><h2 class="flex-1">Layers</h2><button class="mr-[2px] size-[15px] rounded-sm border border-[#036] bg-[#f4f4ee]" aria-label="Pin"><svg class="size-full"><use href="#pin"/></svg></button><button class="size-[15px] rounded-sm border border-[#036] bg-[#f4f4ee]" aria-label="Close"><svg class="size-full"><use href="#cls"/></svg></button></header>
        <div class="flex h-[39px] border border-[#7f9db9]">
          <div class="flex-1">
            <div class="flex h-[18px] items-center gap-[4px] bg-[#2f62cc] pl-px text-white"><svg class="size-4"><use href="#datal"/></svg>Data Layer 1</div>
            <div class="flex h-[20px] items-center gap-[4px] pl-px"><svg class="size-4"><use href="#check"/></svg>Validation errors</div>
          </div>
          <div class="flex w-[20px] flex-col gap-px">
            <button class="flex flex-1 items-center justify-center rounded-xs bg-[#c4d4fc]" aria-label="Up"><svg class="h-[6px] w-[10px]" viewBox="0 0 10 6"><path d="M1 5l4-4 4 4" stroke="#4d6185" stroke-width="2" fill="none"/></svg></button>
            <button class="flex flex-1 items-center justify-center rounded-xs bg-[#c4d4fc]" aria-label="Down"><svg class="h-[6px] w-[10px]" viewBox="0 0 10 6"><path d="M1 1l4 4 4-4" stroke="#4d6185" stroke-width="2" fill="none"/></svg></button>
          </div>
        </div>
        <div class="mt-px grid h-[25px] grid-cols-7 gap-[2px] pr-[4px]">
          <button disabled class="flex items-center justify-center rounded-sm border border-[#d0cdbc] bg-[#f5f4ea]/70 text-[#999]" aria-label="Move up"><svg class="size-[16px]"><use href="#aup"/></svg></button>
          <button class="flex items-center justify-center rounded-sm border border-[#036] bg-[#f7f6f0] text-[#3f76b5]" aria-label="Move down"><svg class="size-[16px] rotate-180"><use href="#aup"/></svg></button>
          <button disabled class="flex items-center justify-center rounded-sm border border-[#d0cdbc] bg-[#f5f4ea]/70" aria-label="Activate"><svg class="h-[16px] w-[20px]"><use href="#stack"/></svg></button>
          <button class="flex items-center justify-center rounded-sm border border-[#036] bg-[#f7f6f0]" aria-label="Show or hide"><svg class="size-[20px]"><use href="#eyes"/></svg></button>
          <button disabled class="flex items-center justify-center rounded-sm border border-[#d0cdbc] bg-[#f5f4ea]/70" aria-label="Merge"><svg class="h-[16px] w-[18px]"><use href="#merge"/></svg></button>
          <button class="flex items-center justify-center rounded-sm border border-[#036] bg-[#f7f6f0]" aria-label="Duplicate"><svg class="h-[18px] w-[20px]"><use href="#lyellow"/></svg></button>
          <button class="flex items-center justify-center rounded-sm border border-[#036] bg-[#f7f6f0] text-[#8a8a8a]" aria-label="Delete layer"><svg class="h-[20px] w-[16px]"><use href="#trash"/></svg></button>
        </div>
      </section>

      <section class="border border-[#aaa896] px-px pb-px">
        <header class="flex h-[21px] items-center pr-px pl-[3px]"><svg class="mr-[2px] size-[12px]"><use href="#fold"/></svg><svg class="mr-[7px] size-4"><use href="#tag"/></svg><h2 class="flex-1">Properties / Memberships</h2><button class="mr-[2px] size-[15px] rounded-sm border border-[#036] bg-[#f4f4ee]" aria-label="Pin"><svg class="size-full"><use href="#pin"/></svg></button><button class="size-[15px] rounded-sm border border-[#036] bg-[#f4f4ee]" aria-label="Close"><svg class="size-full"><use href="#cls"/></svg></button></header>
        <div class="flex h-[89px] items-center border border-[#7f9db9] px-[10px]"><p>Please select the objects you want to change<br>properties for.</p></div>
        <div class="mt-px grid h-[25px] grid-cols-3 gap-[2px] pr-[2px] text-[#999]">
          <button disabled class="flex items-center justify-center gap-[5px] rounded-sm border border-[#d0cdbc] bg-[#f5f4ea]/70"><svg class="size-[14px]"><use href="#plus"/></svg>Add</button>
          <button disabled class="flex items-center justify-center gap-[3px] rounded-sm border border-[#d0cdbc] bg-[#f5f4ea]/70"><svg class="size-[18px]"><use href="#edit"/></svg>Edit</button>
          <button disabled class="flex items-center justify-center gap-[5px] rounded-sm border border-[#d0cdbc] bg-[#f5f4ea]/70"><svg class="h-[20px] w-[16px]"><use href="#gtrash"/></svg>Delete</button>
        </div>
      </section>

      <section class="border border-[#aaa896] px-px pb-px">
        <header class="flex h-[21px] items-center pr-px pl-[3px]"><svg class="mr-[2px] size-[12px]"><use href="#fold"/></svg><svg class="mr-[7px] size-4"><use href="#sellist"/></svg><h2 class="flex-1">Selection</h2><button class="mr-[2px] size-[15px] rounded-sm border border-[#036] bg-[#f4f4ee]" aria-label="Pin"><svg class="size-full"><use href="#pin"/></svg></button><button class="size-[15px] rounded-sm border border-[#036] bg-[#f4f4ee]" aria-label="Close"><svg class="size-full"><use href="#cls"/></svg></button></header>
        <div class="h-[94px] border border-[#7f9db9] bg-white"></div>
        <div class="mt-px grid h-[20px] grid-cols-2 gap-[2px]">
          <button class="flex items-center rounded-sm border border-[#036] bg-[#f0efe8] pr-[5px]"><span class="flex flex-1 items-center justify-center gap-[3px] pl-[14px]"><svg class="size-[18px]"><use href="#selarrow"/></svg>Select</span><svg class="h-[5px] w-[9px]" viewBox="0 0 8 5"><path d="M0 0h8L4 5z"/></svg></button>
          <button class="flex items-center rounded-sm border border-[#036] bg-[#f0efe8] pr-[5px]"><span class="flex flex-1 items-center justify-center gap-[3px] pl-[14px]"><svg class="size-[18px]"><use href="#find"/></svg>Search</span><svg class="h-[5px] w-[9px]" viewBox="0 0 8 5"><path d="M0 0h8L4 5z"/></svg></button>
        </div>
      </section>

      <section class="border border-[#aaa896] px-px">
        <header class="flex h-[21px] items-center pr-px pl-[3px]"><svg class="mr-[2px] size-[12px]"><use href="#fold"/></svg><svg class="mr-[7px] size-4"><use href="#cmdlist"/></svg><h2 class="flex-1">Command Stack</h2><button class="mr-[2px] size-[15px] rounded-sm border border-[#036] bg-[#f4f4ee]" aria-label="Pin"><svg class="size-full"><use href="#pin"/></svg></button><button class="size-[15px] rounded-sm border border-[#036] bg-[#f4f4ee]" aria-label="Close"><svg class="size-full"><use href="#cls"/></svg></button></header>
        <div class="h-[66px] border border-[#7f9db9] bg-white"></div>
      </section>

      <section class="border border-[#aaa896] px-px pb-px">
        <header class="flex h-[21px] items-center pr-px pl-[3px]"><svg class="mr-[2px] size-[12px]"><use href="#fold"/></svg><svg class="mr-[7px] size-4"><use href="#userlist"/></svg><h2 class="flex-1">Authors</h2><button class="mr-[2px] size-[15px] rounded-sm border border-[#036] bg-[#f4f4ee]" aria-label="Pin"><svg class="size-full"><use href="#pin"/></svg></button><button class="size-[15px] rounded-sm border border-[#036] bg-[#f4f4ee]" aria-label="Close"><svg class="size-full"><use href="#cls"/></svg></button></header>
        <div class="h-[89px] border border-[#7f9db9] pt-[3px] pr-[2px]">
          <table class="w-full table-fixed border-b-2 border-[#d6d2c2] text-left"><thead><tr class="h-[18px]"><th class="border-r border-[#c7c5b2] pl-[8px] font-normal">Author</th><th class="border-r border-[#c7c5b2] pl-[10px] font-normal"># Objects</th><th class="border-r border-[#c7c5b2] pl-[10px] font-normal">%</th></tr></thead></table>
        </div>
        <div class="mt-px grid h-[25px] grid-cols-2 gap-[2px] text-[#999]">
          <button disabled class="flex items-center justify-center gap-[3px] rounded-sm border border-[#d0cdbc] bg-[#f5f4ea]/70"><svg class="size-[18px]"><use href="#selarrow"/></svg>Select</button>
          <button disabled class="flex items-center justify-center gap-[3px] rounded-sm border border-[#d0cdbc] bg-[#f5f4ea]/70"><svg class="size-[20px]"><use href="#info"/></svg>Show info</button>
        </div>
      </section>

      <section class="border border-[#aaa896] px-px pb-px">
        <header class="flex h-[21px] items-center pr-px pl-[3px]"><svg class="mr-[2px] size-[12px]"><use href="#fold"/></svg><svg class="mr-[7px] size-4"><use href="#check"/></svg><h2 class="flex-1">Validation errors</h2><button class="mr-[2px] size-[15px] rounded-sm border border-[#036] bg-[#f4f4ee]" aria-label="Pin"><svg class="size-full"><use href="#pin"/></svg></button><button class="size-[15px] rounded-sm border border-[#036] bg-[#f4f4ee]" aria-label="Close"><svg class="size-full"><use href="#cls"/></svg></button></header>
        <div class="h-[92px] border border-[#7f9db9] bg-white"></div>
        <div class="mt-px grid h-[25px] grid-cols-4 gap-[2px] pr-[3px] text-[#999]">
          <button disabled class="flex items-center justify-center gap-[3px] rounded-sm border border-[#d0cdbc] bg-[#f5f4ea]/70"><svg class="size-[18px]"><use href="#selarrow"/></svg>Select</button>
          <button class="flex items-center justify-center gap-[3px] rounded-sm border border-[#036] bg-[#f7f6f0] text-black"><svg class="size-[17px]"><use href="#check"/></svg>Validat...</button>
          <button disabled class="flex items-center justify-center gap-[3px] rounded-sm border border-[#d0cdbc] bg-[#f5f4ea]/70"><svg class="size-[20px]"><use href="#wrench"/></svg>Fix</button>
          <button disabled class="flex items-center justify-center gap-[5px] rounded-sm border border-[#d0cdbc] bg-[#f5f4ea]/70"><svg class="h-[20px] w-[16px]"><use href="#gtrash"/></svg>Ignore</button>
        </div>
      </section>
    </aside>
  </main>
</div>

<footer class="flex h-[36px] items-center bg-linear-to-b from-[#1f62d2] via-[#2766e4] via-30% to-[#1d4fc8] pt-[4px] text-white">
  <button class="flex h-[32px] w-[111px] items-center gap-[6px] rounded-r-lg bg-linear-to-b from-[#69b567] via-[#3a963a] via-30% to-[#2c8030] pt-[2px] pl-[8px] text-[22px] leading-6 font-bold italic shadow-[inset_-3px_-1px_3px_#1c5c22] font-['Open_Sans',sans-serif] [text-shadow:1px_1px_1px_#1c4020]"><svg class="size-[24px]" viewBox="0 0 24 24"><path d="M4 3q4-3 8 0l-2 8q-4-2-8 0z" fill="#f0562a"/><path d="M14 4q4 2 9 0l-3 8q-4 2-8 0z" fill="#8ccf3a"/><path d="M2 13q4-2 8 0l-2 8q-4-3-8 0z" fill="#6c9cf5"/><path d="M12 14q4 2 8 0l-3 8q-4 2-8 0z" fill="#fbc920"/></svg>start</button>
  <svg class="ml-[10px] h-6 w-[6px]"><use href="#grip"/></svg>
  <div class="ml-[3px] flex [&>button]:flex [&>button]:w-[25px] [&>button]:justify-center">
    <button aria-label="Internet Explorer"><svg class="size-[18px]"><use href="#ie"/></svg></button>
    <button aria-label="Folder"><svg class="size-[18px]"><use href="#folder"/></svg></button>
    <button aria-label="Firefox"><svg class="size-[18px]"><use href="#firefox"/></svg></button>
    <button aria-label="Thunderbird"><svg class="size-[18px]"><use href="#tbird"/></svg></button>
    <button aria-label="Star"><svg class="size-[18px]"><use href="#star"/></svg></button>
    <button aria-label="Disc"><svg class="size-[18px]"><use href="#disc"/></svg></button>
    <button aria-label="Skype"><svg class="size-[18px]"><use href="#skype"/></svg></button>
    <button aria-label="OpenOffice"><svg class="size-[18px]"><use href="#oo"/></svg></button>
    <button aria-label="Picasa"><svg class="size-[18px]"><use href="#picasa"/></svg></button>
    <button aria-label="S"><svg class="size-[18px]"><use href="#sgray"/></svg></button>
    <button aria-label="A"><svg class="size-[18px]"><use href="#aorange"/></svg></button>
  </div>
  <svg class="ml-[7px] h-6 w-[6px]"><use href="#grip"/></svg>
  <button class="ml-[5px] flex h-[26px] w-[159px] items-center gap-[4px] rounded-xs bg-[#1d4fb6] pl-[11px] text-[13px] shadow-[inset_1px_1px_2px_#0e2f80]"><svg class="size-[17px]"><use href="#josm"/></svg>Java OpenStreet...</button>
  <button class="ml-[2px] flex h-[26px] w-[158px] items-center gap-[4px] rounded-xs bg-[#4486f6] pl-[9px] text-[13px] shadow-[inset_1px_1px_1px_#6ea4ff]"><svg class="size-[18px]"><use href="#firefox"/></svg>New Ticket – JO...</button>
  <div class="flex-1"></div>
  <svg class="h-6 w-[6px]"><use href="#grip"/></svg>
  <div class="ml-[4px] flex [&>button]:flex [&>button]:w-[25px] [&>button]:justify-center">
    <button aria-label="Calculator"><svg class="size-[18px]"><use href="#calc"/></svg></button>
    <button aria-label="Dreamweaver" class="text-[#4d9a1c]"><svg class="size-[18px]" viewBox="0 0 18 18"><use href="#ball"/><path d="M11 4v8q-5 2-5-1t5-2" fill="none" stroke="#fff" stroke-width="2"/></svg></button>
    <button aria-label="Fireworks" class="text-[#d8961c]"><svg class="size-[18px]" viewBox="0 0 18 18"><use href="#ball"/><path d="M8 5q-3 0-3 8M3 8h5M9 8l1 4 2-4 1 4 2-5" fill="none" stroke="#fff" stroke-width="1.500"/></svg></button>
    <button aria-label="Camera"><svg class="size-[18px]"><use href="#camera"/></svg></button>
    <button aria-label="Flash" class="text-[#e0301c]"><svg class="size-[18px]" viewBox="0 0 18 18"><use href="#ball"/><path d="M12 4q-4 0-5 10M6 9h5" fill="none" stroke="#fff" stroke-width="2"/></svg></button>
    <button aria-label="Excel"><svg class="size-[18px]"><use href="#excel"/></svg></button>
    <button aria-label="Word"><svg class="size-[18px]"><use href="#word"/></svg></button>
    <button aria-label="Paint"><svg class="size-[18px]"><use href="#pens"/></svg></button>
    <button aria-label="Q"><svg class="size-[18px]"><use href="#qred"/></svg></button>
    <button aria-label="JOSM"><svg class="size-[18px]"><use href="#josm"/></svg></button>
    <button aria-label="Inkscape"><svg class="size-[18px]"><use href="#inkscape"/></svg></button>
  </div>
  <div class="ml-[94px] flex h-[32px] w-[230px] items-center border-l border-[#0a3f9c] bg-linear-to-b from-[#2a86e0] via-[#169af0] via-20% to-[#1283dc] pl-[9px] text-[13px] shadow-[inset_1px_0_1px_#5cc4ff] [&>svg]:mr-[2px] [&>svg]:size-[18px]">
    <svg><use href="#usb"/></svg><svg><use href="#speaker"/></svg><svg><use href="#warn"/></svg><svg><use href="#bt"/></svg>
    <svg class="text-[#1a8a34]" viewBox="0 0 18 18"><use href="#ball"/><path d="M7 15V4h3q4 3 0 6H8" fill="none" stroke="#fff" stroke-width="3"/></svg>
    <svg class="text-[#ee7f1a]" viewBox="0 0 18 18"><use href="#ball"/><path d="M6 12q-3-6 3-8 6 1 4 6l-3 3V8" fill="none" stroke="#fff" stroke-width="2"/></svg>
    <svg><use href="#disk2"/></svg><svg><use href="#mouse"/></svg>
    <time class="ml-[8px]">11:01</time>
  </div>
</footer>

<div role="dialog" aria-labelledby="dlg" class="absolute top-[331px] left-1/2 w-[466px] -translate-x-1/2 rounded-t-lg border-2 border-t-0 border-[#0a36c8] bg-[#0a36c8]">
  <div class="-mx-[2px] flex h-[33px] items-center justify-between rounded-t-lg bg-linear-to-b from-[#3c8cf8] via-[#0a4fe0] via-20% to-[#0562fa] pr-[4px] pl-[6px] shadow-[inset_0_1px_0_#0a3cc0]">
    <h1 id="dlg" class="font-['Open_Sans',sans-serif] text-[15px] leading-5 font-bold text-white [text-shadow:1px_1px_0_#0a2a80]">Unexpected Exception</h1>
    <button class="flex size-[26px] items-center justify-center rounded-sm border border-white bg-linear-to-br from-[#f08a6a] to-[#d83c14]" aria-label="Close"><svg class="size-[16px]" viewBox="0 0 16 16"><path d="M2 2l12 12M14 2L2 14" stroke="#fff" stroke-width="2.500"/></svg></button>
  </div>
  <div class="bg-[repeating-conic-gradient(#f6f4e2_0_25%,#dedcd4_0_50%)] bg-[length:2px_2px] pt-[10px] pb-[13px] pl-[9px]">
    <div class="flex gap-[15px]">
      <svg class="size-[33px] shrink-0"><use href="#error"/></svg>
      <p class="pt-px text-[13px] leading-[17px] whitespace-nowrap">An unexpected exception occurred.<br>This is always a coding error. If you are running the latest<br>version of JOSM, please consider being kind and file a bug report.</p>
    </div>
    <div class="mt-[9px] flex justify-center gap-[8px] pr-[9px] text-[13px]">
      <button class="h-[23px] w-[89px] rounded-sm border border-[#036] bg-[#f7f6f0] p-px shadow-[inset_0_0_0_1px_#9cb8ec]"><span class="flex h-full items-center justify-center border border-dotted border-black">Do nothing</span></button>
      <button class="h-[23px] w-[89px] rounded-sm border border-[#036] bg-[#f7f6f0]">Report Bug</button>
    </div>
  </div>
</div>
</div>
</body>
</html>
